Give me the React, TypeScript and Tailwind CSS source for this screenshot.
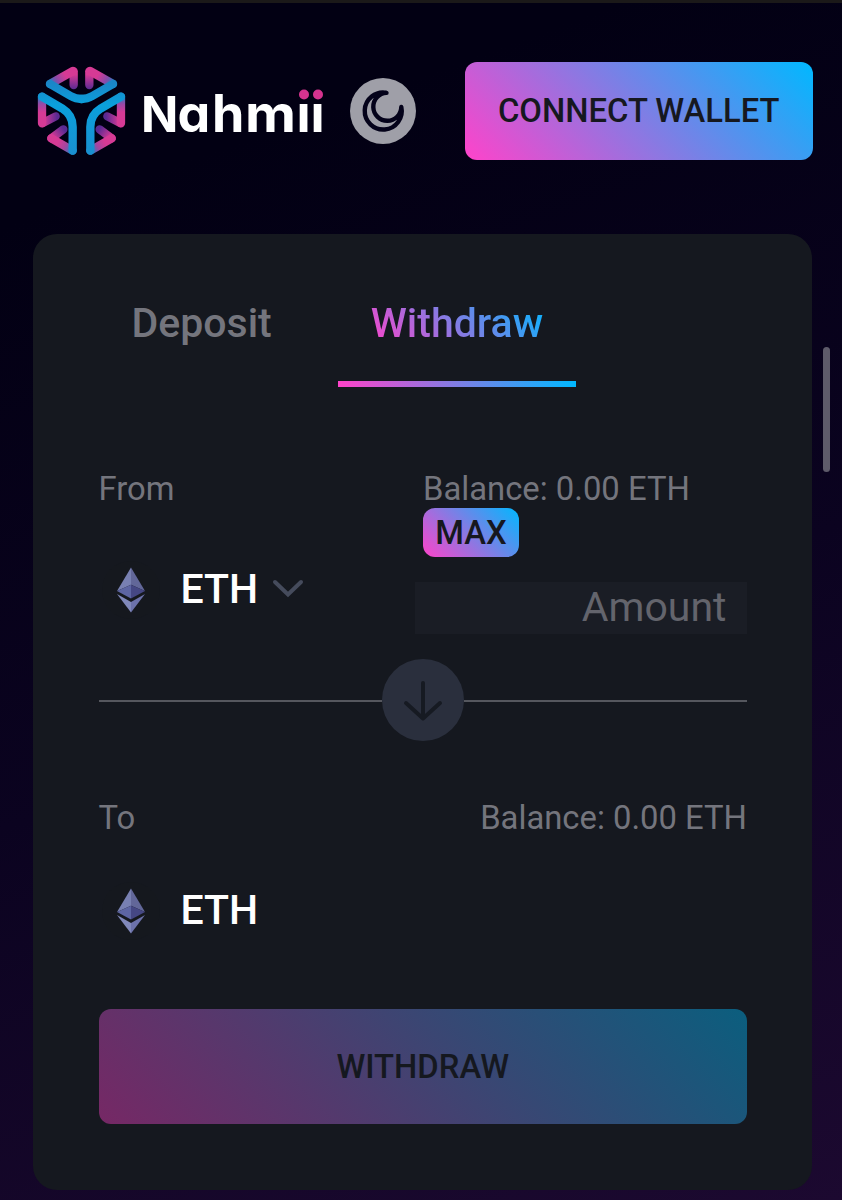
import { useState } from 'react'

type Tab = 'Deposit' | 'Withdraw'

function LogoMark() {
  return (
    <svg width="105" height="105" viewBox="0 0 315 315" fill="none" className="shrink-0">
      <defs>
        <linearGradient id="blue" x1="0" y1="70" x2="0" y2="285" gradientUnits="userSpaceOnUse">
          <stop offset="0" stopColor="#1a86c8" />
          <stop offset="0.3" stopColor="#0aa0dc" />
          <stop offset="1" stopColor="#1a8fd0" />
        </linearGradient>
        <linearGradient id="top" x1="60" y1="72" x2="120" y2="36" gradientUnits="userSpaceOnUse">
          <stop offset="0" stopColor="#1c84c6" />
          <stop offset="0.35" stopColor="#8a4aa8" />
          <stop offset="0.75" stopColor="#d63a95" />
        </linearGradient>
        <linearGradient id="topEnd" x1="0" y1="32" x2="0" y2="88" gradientUnits="userSpaceOnUse">
          <stop offset="0.2" stopColor="#d63a95" />
          <stop offset="1" stopColor="#5a2a92" />
        </linearGradient>
        <linearGradient id="side" x1="0" y1="108" x2="0" y2="190" gradientUnits="userSpaceOnUse">
          <stop offset="0" stopColor="#1c84c6" />
          <stop offset="0.3" stopColor="#9a48a6" />
          <stop offset="0.6" stopColor="#d63a95" />
        </linearGradient>
        <linearGradient id="sideEnd" x1="36" y1="0" x2="86" y2="0" gradientUnits="userSpaceOnUse">
          <stop offset="0.1" stopColor="#d63a95" />
          <stop offset="0.9" stopColor="#5a2a92" />
        </linearGradient>
        <linearGradient id="low" x1="128" y1="272" x2="66" y2="236" gradientUnits="userSpaceOnUse">
          <stop offset="0" stopColor="#1c84c6" />
          <stop offset="0.35" stopColor="#a545a0" />
          <stop offset="0.7" stopColor="#d63a95" />
        </linearGradient>
        <linearGradient id="lowEnd" x1="64" y1="235" x2="106" y2="204" gradientUnits="userSpaceOnUse">
          <stop offset="0.1" stopColor="#d63a95" />
          <stop offset="0.9" stopColor="#5a2a92" />
        </linearGradient>
        <g id="half" strokeWidth="25" strokeLinecap="round" strokeLinejoin="round">
          <path d="M131 34V75" stroke="url(#topEnd)" />
          <path d="M60 72L129 33" stroke="url(#top)" />
          <path d="M38 189L77 169" stroke="url(#sideEnd)" />
          <path d="M36 110L36.1 190" stroke="url(#side)" />
          <path d="M64 235L100 208" stroke="url(#lowEnd)" />
          <path d="M128 272L64 235" stroke="url(#low)" />
          <path d="M60 72L122 108Q137 117 155 117" stroke="url(#blue)" />
          <path d="M36 110L96 145Q128 165 128 200V272" stroke="url(#blue)" />
        </g>
      </defs>
      <use href="#half" />
      <use href="#half" transform="matrix(-1 0 0 1 309 0)" />
    </svg>
  )
}

function Wordmark() {
  return (
    <svg width="195" height="76" viewBox="0 0 195 76" className="shrink-0 overflow-visible">
      <text
        y="52"
        className="font-['Inter',sans-serif] text-[52px] font-bold [font-feature-settings:'cv11']"
        fill="#fff"
      >
        <tspan x="6" className="text-[49px]">N</tspan>
        <tspan x="42.5">a</tspan>
        <tspan x="77">h</tspan>
        <tspan x="110" textLength="51" lengthAdjust="spacingAndGlyphs">m</tspan>
        <tspan x="161.5">i</tspan>
        <tspan x="175.5">i</tspan>
      </text>
      {/* pink dots replace the white ones */}
      <rect x="162" y="6" width="30" height="17" fill="#020013" />
      <circle cx="169" cy="14.5" r="5" fill="#d6338f" />
      <circle cx="183" cy="14.5" r="5" fill="#d6338f" />
    </svg>
  )
}

function EthIcon() {
  return (
    <svg width="66" height="66" viewBox="0 0 66 66" className="-ml-px shrink-0">
      <circle cx="33" cy="33" r="29" fill="#15181e" />
      <path d="M33 10.5L19 34L33 27.7Z" fill="#7880b2" />
      <path d="M33 10.5L47 34L33 27.7Z" fill="#626799" />
      <path d="M19 34L33 27.7V41.5Z" fill="#5d65a3" />
      <path d="M47 34L33 27.7V41.5Z" fill="#454784" />
      <path d="M19 37L33 45V55.5Z" fill="#8088ba" />
      <path d="M47 37L33 45V55.5Z" fill="#6c72ab" />
    </svg>
  )
}

function Token({ select = false }: { select?: boolean }) {
  return (
    <div className="flex h-[66px] items-center">
      <EthIcon />
      <span className="ml-[17px] text-[41px] font-medium text-white">ETH</span>
      {select && (
        <svg width="34" height="22" viewBox="0 0 34 22" fill="none" className="mb-[4px] ml-[13px]">
          <path d="M4 5L17 17.5L30 5" stroke="#454b5c" strokeWidth="4" strokeLinecap="round" />
        </svg>
      )}
    </div>
  )
}

export default function App() {
  const [tab, setTab] = useState<Tab>('Withdraw')
  const tabs: Tab[] = ['Deposit', 'Withdraw']

  return (
    <div className="relative h-[1200px] w-[842px] overflow-hidden border-t-[3px] border-[#1b1919] bg-linear-[160deg,#020013_0%,#020013_15%,#0b0320_55%,#1c0930_100%] font-['Roboto',sans-serif] text-[#74757d]">
      {/* Header */}
      <header className="flex h-[231px] items-start pt-[57px] pl-[30px]">
        <LogoMark />
        <div className="mt-[20px]">
          <Wordmark />
        </div>
        <button className="mt-[18px] ml-[20px] size-[66px] shrink-0 rounded-full bg-[#9f9fa8]">
          <svg width="66" height="66" viewBox="0 0 66 66" fill="none">
            <path
              d="M36.5 14.8A18.5 18.5 0 1 0 51.3 29A14 14 0 1 1 36.5 14.8Z"
              stroke="#04021a"
              strokeWidth="4.4"
              strokeLinejoin="round"
            />
          </svg>
        </button>
        <button className="mt-[2px] ml-[49px] h-[98px] w-[347.5px] shrink-0 rounded-xl bg-linear-[45deg,#ff43ca,#00b8ff] pt-[2px] text-[32.8px] font-medium text-[#16181f]">
          CONNECT WALLET
        </button>
      </header>

      {/* Bridge card */}
      <main className="ml-[33px] h-[956px] w-[779px] rounded-3xl bg-[#15181f] pt-[33px] pr-[65px] pl-[65.5px]">
        <nav className="flex gap-[33px]">
          {tabs.map((name) => (
            <button
              key={name}
              onClick={() => setTab(name)}
              className="relative h-[120px] px-[33px] pb-[7px] text-[41px] font-medium"
            >
              <span
                className={
                  name === tab
                    ? 'bg-linear-[45deg,#ff43ca,#00b8ff] bg-clip-text text-transparent'
                    : ''
                }
              >
                {name}
              </span>
              {name === tab && (
                <span className="absolute inset-x-0 bottom-0 h-[6px] bg-linear-[90deg,#ff43ca,#00b8ff]" />
              )}
            </button>
          ))}
        </nav>

        <div className="mt-[82px] flex h-[165px] justify-between">
          <div>
            <div className="pt-px text-[32.8px] leading-[39px]">From</div>
            <div className="mt-[48px]">
              <Token select />
            </div>
          </div>
          <div className="w-[332px]">
            <div className="h-[39px] pt-px pl-2 text-[32.8px] leading-[39px]">Balance: 0.00 ETH</div>
            <button className="ml-2 flex h-[49px] w-[96px] items-center justify-center rounded-xl bg-linear-[45deg,#ff43ca,#00b8ff] pt-[2px] text-[32.8px] font-medium text-[#16181f]">
              MAX
            </button>
            <input
              placeholder="Amount"
              className="mt-[25px] block h-[52px] w-full bg-[#1a1d25] px-[20.5px] text-right text-[41px] placeholder:text-[#63646c]"
            />
          </div>
        </div>

        <div className="mt-[25px] flex h-[82px] items-center">
          <div className="mt-px h-[2px] flex-1 bg-[#55575e]" />
          <div className="flex size-[82px] items-center justify-center rounded-full bg-[#2a2f3d]">
            <svg width="44" height="44" viewBox="0 0 44 44" fill="none">
              <path
                d="M22 5V40M5 25L22 40.5L39 25"
                stroke="#161a22"
                strokeWidth="4"
                strokeLinecap="round"
                strokeLinejoin="round"
              />
            </svg>
          </div>
          <div className="mt-px h-[2px] flex-1 bg-[#55575e]" />
        </div>

        <div className="mt-[58px] flex justify-between text-[32.8px] leading-[39px]">
          <span>To</span>
          <span>Balance: 0.00 ETH</span>
        </div>
        <div className="mt-[40px]">
          <Token />
        </div>

        <button className="mt-[65px] h-[115px] w-full rounded-xl bg-linear-[45deg,#762865,#0b5e7e] pt-[2px] text-[32.8px] font-medium text-[#15181f]">
          WITHDRAW
        </button>
      </main>

      {/* Scrollbar thumb */}
      <div className="absolute top-[344px] right-[12px] h-[125px] w-[7px] rounded-full bg-[#5e5b6a]" />
    </div>
  )
}
